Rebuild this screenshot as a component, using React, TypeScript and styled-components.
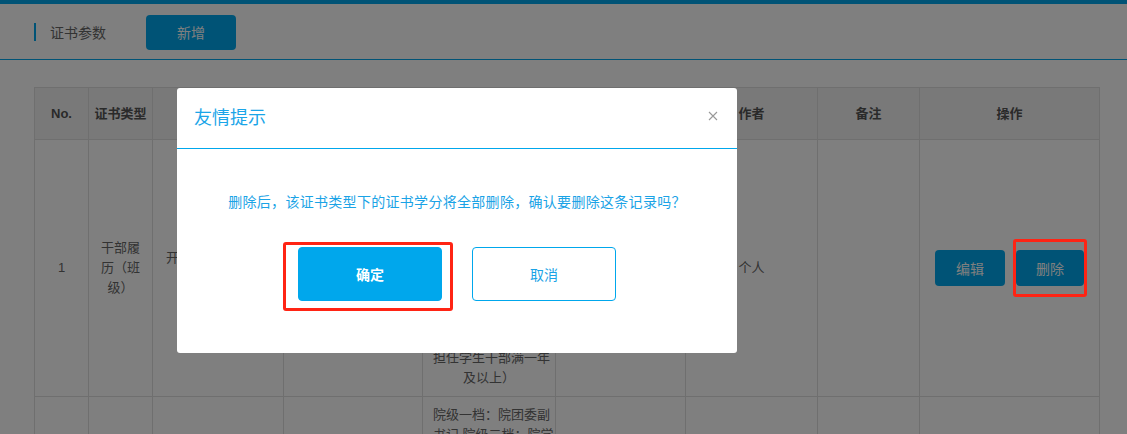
import styled, { createGlobalStyle } from "styled-components";

const GlobalStyle = createGlobalStyle`
  html, body {
    margin: 0;
    padding: 0;
    overflow: hidden;
    background: #fff;
    font-family: "Liberation Sans", "Noto Sans CJK SC", sans-serif;
  }
  * { box-sizing: border-box; }
`;

const BLUE = "#00a7ec";

const TopStripe = styled.div`
  height: 4px;
  background: ${BLUE};
`;

const Header = styled.header`
  height: 56px;
  display: flex;
  align-items: center;
  padding-left: 34px;
  border-bottom: 1px solid ${BLUE};
`;

const Title = styled.div`
  display: flex;
  align-items: center;
  gap: 14px;
  font-size: 14px;
  color: #666;
  &::before {
    content: "";
    width: 2px;
    height: 18px;
    background: ${BLUE};
  }
`;

const Button = styled.button<{ $w: number; $h: number }>`
  width: ${(p) => p.$w}px;
  height: ${(p) => p.$h}px;
  border: none;
  border-radius: 4px;
  background: ${BLUE};
  color: #fff;
  font-family: inherit;
  font-size: 14px;
  padding: 0;
  cursor: pointer;
`;

const AddButton = styled(Button)`
  margin-left: 40px;
  margin-top: 1px;
`;

const Main = styled.main`
  padding: 27px 0 0 34px;
`;

const Table = styled.table`
  border-collapse: collapse;
  table-layout: fixed;
  width: 1065px;
  font-size: 13px;
  line-height: 20px;
  color: #666;
`;

const Th = styled.th`
  height: 52px;
  background: #f3f3f3;
  border: 1px solid #dedede;
  color: #555;
  font-weight: bold;
  text-align: center;
  padding: 0 4px;
  white-space: nowrap;
`;

const Td = styled.td`
  border: 1px solid #dedede;
  text-align: center;
  vertical-align: middle;
  padding: 8px 10px;
  white-space: nowrap;
`;

const Actions = styled.div`
  display: flex;
  justify-content: center;
  gap: 11px;
`;

const Overlay = styled.div`
  position: fixed;
  inset: 0;
  background: rgba(0, 0, 0, 0.5);
  z-index: 10;
`;

const Modal = styled.div`
  position: fixed;
  left: 177px;
  top: 88px;
  width: 560px;
  height: 265px;
  background: #fff;
  border-radius: 3px;
  z-index: 11;
`;

const ModalHead = styled.div`
  height: 61px;
  display: flex;
  align-items: center;
  justify-content: space-between;
  padding: 0 18px 4px 17px;
  border-bottom: 1px solid ${BLUE};
`;

const ModalTitle = styled.div`
  font-size: 18px;
  color: #1aa5e8;
`;

const Close = styled.button`
  border: none;
  background: none;
  padding: 0;
  width: 12px;
  height: 12px;
  display: flex;
  cursor: pointer;
`;

const ModalBody = styled.div`
  display: flex;
  flex-direction: column;
  align-items: center;
  padding-top: 43px;
`;

const Message = styled.p`
  margin: 0;
  font-size: 14px;
  letter-spacing: 0.3px;
  line-height: 20px;
  color: #1aa3e6;
`;

const ModalActions = styled.div`
  display: flex;
  gap: 30px;
  margin-top: 35px;
`;

const ModalButton = styled.button<{ $primary?: boolean }>`
  width: 144px;
  height: 54px;
  border-radius: 4px;
  border: 1px solid ${BLUE};
  background: ${(p) => (p.$primary ? BLUE : "#fff")};
  color: ${(p) => (p.$primary ? "#fff" : "#1aa3e6")};
  font-family: inherit;
  font-size: 14px;
  font-weight: ${(p) => (p.$primary ? "bold" : "normal")};
  cursor: pointer;
`;

const Mark = styled.div<{ $x: number; $y: number; $w: number; $h: number }>`
  position: fixed;
  left: ${(p) => p.$x}px;
  top: ${(p) => p.$y}px;
  width: ${(p) => p.$w}px;
  height: ${(p) => p.$h}px;
  border: 3px solid #ff2414;
  border-radius: 3px;
  z-index: 12;
  pointer-events: none;
`;

const cols = [54, 64, 131, 139, 133, 130, 132, 102, 180];
const heads = ["No.", "证书类型", "证书名称", "学分", "认定标准", "认定部门", "作者", "备注", "操作"];

const lines = (arr: string[]) =>
  arr.map((l, i) => (
    <span key={i}>
      {l}
      {i < arr.length - 1 && <br />}
    </span>
  ));

const App = () => {
  return (
    <>
      <GlobalStyle />
      <TopStripe />
      <Header>
        <Title>证书参数</Title>
        <AddButton $w={90} $h={35}>新增</AddButton>
      </Header>
      <Main>
        <Table>
          <colgroup>
            {cols.map((w, i) => (
              <col key={i} style={{ width: w }} />
            ))}
          </colgroup>
          <thead>
            <tr>
              {heads.map((h) => (
                <Th key={h}>{h}</Th>
              ))}
            </tr>
          </thead>
          <tbody>
            <tr>
              <Td>1</Td>
              <Td>{lines(["干部履", "历（班", "级）"])}</Td>
              <Td>{lines(["开学初至期末担任", "班级干部"])}</Td>
              <Td>0.5</Td>
              <Td>
                {lines([
                  "校级一档：校团委副",
                  "书记、校学生会主席",
                  "（担任学生干部满一",
                  "年及以上）；校级二",
                  "档：校学生会副主席",
                  "及各部部长（担任学",
                  "生干部满一年及以上",
                  "）；校级三档：校学",
                  "生会各部副部长、干",
                  "事及班级班长（需",
                  "担任学生干部满一年",
                  "及以上）",
                ])}
              </Td>
              <Td>学生处</Td>
              <Td>个人</Td>
              <Td />
              <Td>
                <Actions>
                  <Button $w={70} $h={36}>编辑</Button>
                  <Button $w={68} $h={36}>删除</Button>
                </Actions>
              </Td>
            </tr>
            <tr>
              <Td>2</Td>
              <Td>{lines(["干部履", "历（院", "级）"])}</Td>
              <Td>{lines(["开学初至期末担任", "院级干部"])}</Td>
              <Td>0.5</Td>
              <Td>
                {lines([
                  "院级一档：院团委副",
                  "书记,院级二档：院学",
                  "生会主席、院团委各",
                  "部部长（担任学生干",
                  "部满一年及以上）",
                  "院级三档：院学生会",
                  "各部副部长",
                ])}
              </Td>
              <Td>学生处</Td>
              <Td>个人</Td>
              <Td />
              <Td>
                <Actions>
                  <Button $w={70} $h={36}>编辑</Button>
                  <Button $w={68} $h={36}>删除</Button>
                </Actions>
              </Td>
            </tr>
          </tbody>
        </Table>
      </Main>

      <Overlay />
      <Modal>
        <ModalHead>
          <ModalTitle>友情提示</ModalTitle>
          <Close aria-label="关闭">
            <svg width="12" height="12" viewBox="0 0 12 12">
              <path d="M2 2 L10 10 M10 2 L2 10" stroke="#999" strokeWidth="1.1" />
            </svg>
          </Close>
        </ModalHead>
        <ModalBody>
          <Message>删除后，该证书类型下的证书学分将全部删除，确认要删除这条记录吗？</Message>
          <ModalActions>
            <ModalButton $primary>确定</ModalButton>
            <ModalButton>取消</ModalButton>
          </ModalActions>
        </ModalBody>
      </Modal>
      <Mark $x={283} $y={242} $w={170} $h={69} />
      <Mark $x={1013} $y={239} $w={74} $h={58} />
    </>
  );
};

export default App;
